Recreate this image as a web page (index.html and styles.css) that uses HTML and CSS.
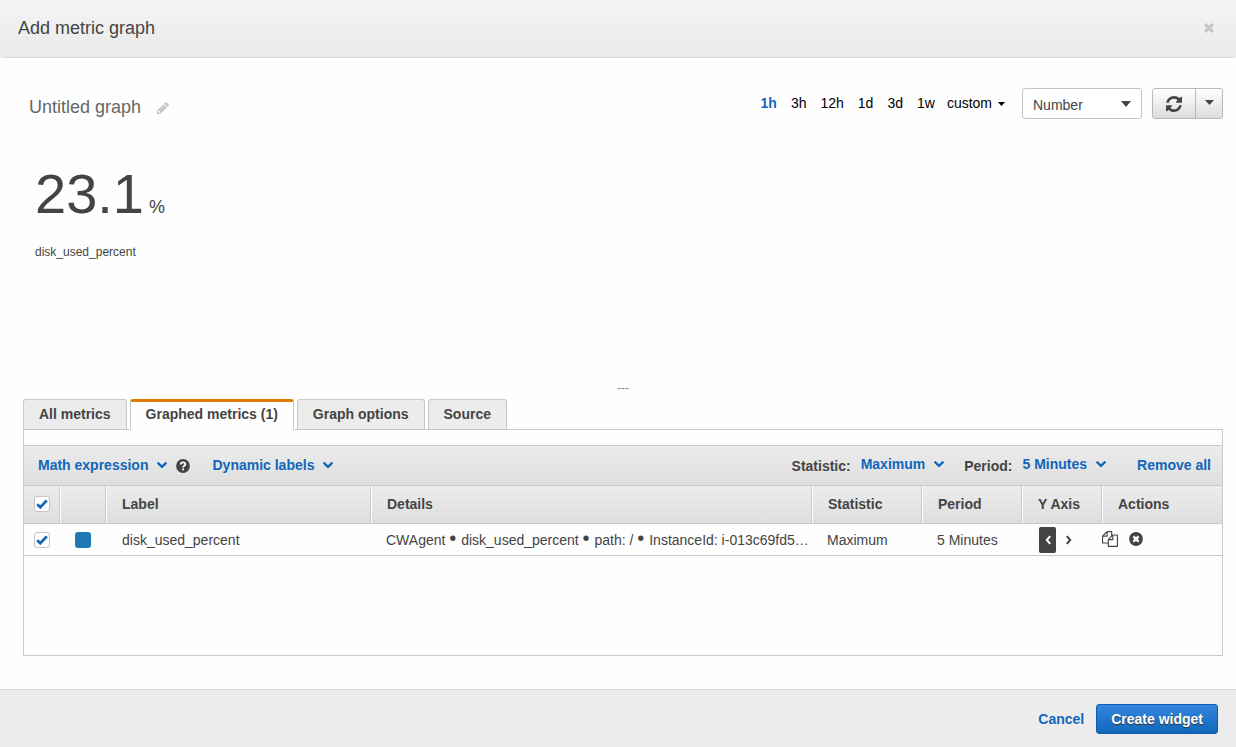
FILE: index.html
```html
<!DOCTYPE html>
<html lang="en">
<head>
<meta charset="utf-8">
<title>Add metric graph</title>
<link rel="stylesheet" href="styles.css">
</head>
<body>
<svg class="sprite" aria-hidden="true">
  <symbol id="chevron" viewBox="0 0 12 8"><path d="M1.600 1.600 6 5.800l4.400-4.200" fill="none" stroke="currentColor" stroke-width="2.300"/></symbol>
  <symbol id="caret" viewBox="0 0 10 6" preserveAspectRatio="none"><path d="M0 0h10L5 6z" fill="currentColor"/></symbol>
</svg>
<div class="dialog">
  <header class="dialog-header">
    <h1 class="dialog-title">Add metric graph</h1>
    <button class="close" type="button" aria-label="Close">
      <svg width="10" height="10" viewBox="0 0 10 10"><path d="M1.100 1.100l7.800 7.800M8.900 1.100L1.100 8.900" stroke="currentColor" stroke-width="3.200"/></svg>
    </button>
  </header>

  <main class="dialog-body">
    <div class="toolbar">
      <h2 class="graph-title">Untitled graph</h2>
      <button class="edit" type="button" aria-label="Edit title">
        <svg width="12" height="12" viewBox="0 0 1536 1536"><path fill="currentColor" d="M363 1408l91-91-235-235-91 91v107h128v128h107zm523-928q0-22-22-22-10 0-17 7l-542 542q-7 7-7 17 0 22 22 22 10 0 17-7l542-542q7-7 7-17zm-54-192l416 416-832 832h-416v-416zm683 96q0 53-37 90l-166 166-416-416 166-165q36-38 90-38 53 0 91 38l235 234q37 39 37 91z"/></svg>
      </button>
      <nav class="ranges" aria-label="Time range">
        <a class="range range-active" href="#">1h</a>
        <a class="range" href="#">3h</a>
        <a class="range" href="#">12h</a>
        <a class="range" href="#">1d</a>
        <a class="range" href="#">3d</a>
        <a class="range" href="#">1w</a>
        <a class="range" href="#">custom <svg class="range-caret" width="7" height="4"><use href="#caret"/></svg></a>
      </nav>
      <div class="select-wrap">
        <select class="select" aria-label="Graph type"><option>Number</option></select>
        <svg class="select-caret" width="10" height="6"><use href="#caret"/></svg>
      </div>
      <div class="button-group">
        <button class="group-button group-refresh" type="button" aria-label="Refresh">
          <svg width="16" height="16" viewBox="0 0 1536 1536"><path fill="currentColor" d="M1511 928q0 5-1 7-64 268-268 434.500t-478 166.500q-146 0-282.500-55t-243.500-157l-129 129q-19 19-45 19t-45-19-19-45v-448q0-26 19-45t45-19h448q26 0 45 19t19 45-19 45l-137 137q71 66 161 102t187 36q134 0 250-65t186-179q11-17 53-117 8-23 30-23h192q13 0 22.500 9.500t9.500 22.500zm25-800v448q0 26-19 45t-45 19h-448q-26 0-45-19t-19-45 19-45l138-138q-148-137-349-137-134 0-250 65t-186 179q-11 17-53 117-8 23-30 23h-199q-13 0-22.500-9.500t-9.500-22.500v-7q65-268 270-434.500t480-166.500q146 0 284 55.500t245 156.500l130-129q19-19 45-19t45 19 19 45z"/></svg>
        </button>
        <button class="group-button group-menu" type="button" aria-label="Refresh options">
          <svg width="9" height="5"><use href="#caret"/></svg>
        </button>
      </div>
    </div>

    <section class="graph">
      <div class="reading"><span class="value">23.1</span><span class="unit">%</span></div>
      <div class="series">disk_used_percent</div>
    </section>

    <div class="splitter">---</div>

    <div class="tabs" role="tablist">
      <button class="tab" type="button" role="tab">All metrics</button>
      <button class="tab tab-active" type="button" role="tab" aria-selected="true">Graphed metrics (1)</button>
      <button class="tab" type="button" role="tab">Graph options</button>
      <button class="tab" type="button" role="tab">Source</button>
    </div>

    <section class="panel">
      <div class="actions-bar">
        <button class="link-button" type="button">Math expression<svg class="chevron" width="12" height="8"><use href="#chevron"/></svg></button>
        <button class="help" type="button" aria-label="Help">
          <svg width="14" height="14" viewBox="0 0 14 14"><circle cx="7" cy="7" r="6.900" fill="currentColor"/><path d="M4.700 5.500C4.900 4 5.800 3.400 7 3.400c1.300 0 2.300.8 2.300 1.900 0 1.600-2.200 1.500-2.200 3.200" fill="none" stroke="#fff" stroke-width="1.800"/><path d="M6.100 9.400h1.900v1.800H6.100z" fill="#fff"/></svg>
        </button>
        <button class="link-button" type="button">Dynamic labels<svg class="chevron" width="12" height="8"><use href="#chevron"/></svg></button>
        <div class="bar-right">
          <div class="pair"><span class="pair-name">Statistic:</span><button class="link-button pair-value" type="button">Maximum<svg class="chevron" width="12" height="8"><use href="#chevron"/></svg></button></div>
          <div class="pair"><span class="pair-name">Period:</span><button class="link-button pair-value" type="button">5 Minutes<svg class="chevron" width="12" height="8"><use href="#chevron"/></svg></button></div>
          <button class="link-button remove" type="button">Remove all</button>
        </div>
      </div>

      <table class="metrics">
        <colgroup>
          <col class="col-check"><col class="col-color"><col class="col-label"><col class="col-details"><col class="col-stat"><col class="col-period"><col class="col-axis"><col class="col-actions">
        </colgroup>
        <thead>
          <tr>
            <th class="check-cell"><input class="check" type="checkbox" checked aria-label="Select all metrics"><svg class="tick" width="12" height="10" viewBox="0 0 12 10"><path d="M1.200 5.300 4.300 8.200 10.800 1.400" fill="none" stroke="currentColor" stroke-width="2.800"/></svg></th>
            <th></th>
            <th>Label</th>
            <th>Details</th>
            <th>Statistic</th>
            <th>Period</th>
            <th>Y Axis</th>
            <th>Actions</th>
          </tr>
        </thead>
        <tbody>
          <tr>
            <td class="check-cell"><input class="check" type="checkbox" checked aria-label="Select disk_used_percent"><svg class="tick" width="12" height="10" viewBox="0 0 12 10"><path d="M1.200 5.300 4.300 8.200 10.800 1.400" fill="none" stroke="currentColor" stroke-width="2.800"/></svg></td>
            <td class="color-cell"><button class="swatch" type="button" aria-label="Series colour"></button></td>
            <td class="label-cell">disk_used_percent</td>
            <td class="details-cell">CWAgent <b class="dot">•</b> disk_used_percent <b class="dot">•</b> path: / <b class="dot">•</b> InstanceId: i-013c69fd5…</td>
            <td>Maximum</td>
            <td>5 Minutes</td>
            <td class="axis-cell">
              <div class="axis">
                <button class="axis-button axis-on" type="button" aria-label="Left axis"><svg width="6" height="10" viewBox="0 0 6 10"><path d="M5.200 1.200 1.800 5l3.400 3.800" fill="none" stroke="currentColor" stroke-width="2"/></svg></button>
                <button class="axis-button" type="button" aria-label="Right axis"><svg width="6" height="10" viewBox="0 0 6 10"><path d="M.8 1.200 4.200 5 .8 8.800" fill="none" stroke="currentColor" stroke-width="2"/></svg></button>
              </div>
            </td>
            <td class="actions-cell">
              <div class="row-actions">
                <button class="icon-button" type="button" aria-label="Duplicate"><svg width="16" height="16" viewBox="0 0 1792 1792"><path fill="currentColor" d="M1696 384q40 0 68 28t28 68v1216q0 40-28 68t-68 28h-960q-40 0-68-28t-28-68v-288h-544q-40 0-68-28t-28-68v-672q0-40 20-88t48-76l408-408q28-28 76-48t88-20h416q40 0 68 28t28 68v328q68-40 128-40h416zm-544 213l-299 299h299v-299zm-640-384l-299 299h299v-299zm196 647l316-316v-416h-384v416q0 40-28 68t-68 28h-416v640h512v-256q0-40 20-88t48-76zm956 804v-1152h-384v416q0 40-28 68t-68 28h-416v640h896z"/></svg></button>
                <button class="icon-button" type="button" aria-label="Remove"><svg width="14" height="14" viewBox="0 0 14 14"><circle cx="7" cy="7" r="6.900" fill="currentColor"/><path d="M4.400 4.400l5.200 5.200M9.600 4.400L4.400 9.600" stroke="#fff" stroke-width="2.400"/></svg></button>
              </div>
            </td>
          </tr>
        </tbody>
      </table>
    </section>
  </main>

  <footer class="dialog-footer">
    <button class="link-button" type="button">Cancel</button>
    <button class="primary" type="button">Create widget</button>
  </footer>
</div>
</body>
</html>
```
FILE: styles.css
```css
* { box-sizing: border-box; }

body {
  margin: 0;
  background: #fefefe;
  color: #444;
  font-family: "Liberation Sans", Arial, sans-serif;
  font-size: 14px;
  line-height: 20px;
}

button {
  margin: 0;
  padding: 0;
  border: 0;
  background: none;
  color: inherit;
  font: inherit;
  cursor: pointer;
}

svg { display: block; }
.sprite { position: absolute; width: 0; height: 0; }

.dialog { display: flex; flex-direction: column; min-height: 100vh; }

.dialog-header {
  display: flex;
  align-items: center;
  justify-content: space-between;
  height: 58px;
  padding: 0 22px 2px 18px;
  border-bottom: 1px solid #d9d9d9;
  border-radius: 0 0 3px 3px;
  background: linear-gradient(#f4f4f4, #eaeaea);
}

.dialog-title { margin: 0; font-size: 18px; font-weight: normal; }
.close { color: #c6c6c6; }

.dialog-body {
  display: flex;
  flex: 1;
  flex-direction: column;
  padding: 30px 13px 33px 23px;
}

.toolbar { display: flex; align-items: center; height: 31px; }
.graph-title { margin: 0; padding: 6px 0 0 6px; color: #666; font-size: 18px; font-weight: normal; }
.edit { padding: 8px 0 0 16px; color: #c4c4c4; }

.ranges { display: flex; gap: 14px; margin-left: auto; padding: 0 17px 2px 0; }
.range { display: flex; align-items: center; color: #000; text-decoration: none; }
.range:last-child { margin-left: -2px; }
.range-active { color: #1166bb; font-weight: bold; }
.range-caret { margin: 2px 0 0 6px; }

.select-wrap { position: relative; width: 120px; margin-right: 10px; }
.select {
  width: 100%;
  height: 31px;
  padding: 2px 10px 0;
  border: 1px solid #c4c4c4;
  border-radius: 3px;
  appearance: none;
  background: #fff;
  color: #444;
  font: inherit;
}
.select-caret { position: absolute; top: 13px; right: 11px; pointer-events: none; }

.button-group {
  display: flex;
  height: 31px;
  border: 1px solid #b9b9b9;
  border-radius: 3px;
  background: linear-gradient(#fff, #dcdcdc);
}
.group-button { display: flex; align-items: center; justify-content: center; }
.group-refresh { width: 43px; border-right: 1px solid #b9b9b9; }
.group-menu { width: 26px; padding-bottom: 2px; }

.graph { flex: 1; padding: 39px 12px 0; }
.reading { display: flex; align-items: baseline; }
.value { font-size: 56px; line-height: 72px; }
.unit { padding-left: 5px; font-size: 18px; }
.series { margin-top: 12px; font-size: 12px; }

.splitter { padding-bottom: 2px; color: #888; font-size: 12px; line-height: 18px; text-align: center; }

.tabs { display: flex; gap: 3px; }
.tab {
  height: 30px;
  padding: 0 15px 2px;
  border: 1px solid #c9c9c9;
  border-bottom: 0;
  border-radius: 3px 3px 0 0;
  background: #ececec;
  font-weight: bold;
}
.tab-active {
  z-index: 1;
  height: 31px;
  margin-bottom: -1px;
  padding-bottom: 4px;
  border-top: 3px solid #df7b00;
  background: #fefefe;
}

.panel {
  min-height: 227px;
  padding-top: 15px;
  border: 1px solid #c9c9c9;
}

.actions-bar {
  display: flex;
  align-items: center;
  height: 41px;
  padding: 0 11px 2px 14px;
  border-top: 1px solid #c9c9c9;
  border-bottom: 1px solid #c9c9c9;
  background: linear-gradient(#ececec, #dedede);
}
.link-button { display: flex; align-items: center; color: #1166bb; font-weight: bold; white-space: nowrap; }
.chevron { margin: 1px 0 0 8px; }
.help { padding: 2px 22px 0 8px; }
.bar-right { display: flex; align-items: center; margin-left: auto; }
.pair { display: flex; align-items: center; margin-right: 19px; font-weight: bold; }
.pair-name { padding: 2px 10px 0 0; }
.pair-value { padding-bottom: 2px; }
.remove { margin-left: 11px; }

.metrics { width: 100%; border-collapse: separate; border-spacing: 0; table-layout: fixed; }
.col-check { width: 36px; }
.col-color { width: 46px; }
.col-label { width: 265px; }
.col-stat { width: 110px; }
.col-period { width: 100px; }
.col-axis { width: 80px; }
.col-actions { width: 120px; }

.metrics th {
  height: 38px;
  padding: 0 15px 2px;
  border-right: 1px solid #c9c9c9;
  border-bottom: 1px solid #c9c9c9;
  border-left: 1px solid #fff;
  background: linear-gradient(#ececec, #dedede);
  text-align: left;
}
.metrics th:first-child { border-left: 0; }
.metrics th:last-child { border-right: 0; }
.metrics td { height: 32px; padding: 0 15px; border-bottom: 1px solid #c9c9c9; }
.metrics .check-cell { padding: 0 0 0 10px; }
.metrics th.check-cell { padding-bottom: 2px; }
.metrics .label-cell { padding-left: 16px; }
.metrics .details-cell { padding-right: 0; white-space: nowrap; }
.dot { margin-right: 1px; font-weight: normal; font-size: 20px; line-height: 16px; }

.check {
  display: block;
  width: 16px;
  height: 16px;
  margin: 0;
  border: 1px solid #c4c4c4;
  border-radius: 3px;
  appearance: none;
  background: #fff;
}
.tick { position: absolute; margin: -13px 0 0 2px; color: #1166bb; pointer-events: none; }
.swatch { display: block; width: 16px; height: 16px; border-radius: 3px; background: #1f77b4; }

.axis { display: flex; gap: 4px; }
.metrics .axis-cell { padding-left: 17px; }
.axis-button { display: flex; align-items: center; justify-content: center; width: 17px; height: 26px; border-radius: 2px; }
.axis-on { background: #444; color: #fff; }
.row-actions { display: flex; align-items: center; gap: 11px; padding-bottom: 2px; }
.metrics .actions-cell { padding-left: 0; }

.dialog-footer {
  display: flex;
  align-items: center;
  justify-content: flex-end;
  gap: 12px;
  height: 58px;
  padding: 0 18px;
  border-top: 1px solid #d9d9d9;
  background: #ececec;
}
.primary {
  height: 30px;
  padding: 0 14px;
  border: 1px solid #0f5cad;
  border-radius: 3px;
  background: linear-gradient(#3387dd, #1166bb);
  color: #fff;
  font-weight: bold;
  text-shadow: 0 1px 1px #333;
}
```
